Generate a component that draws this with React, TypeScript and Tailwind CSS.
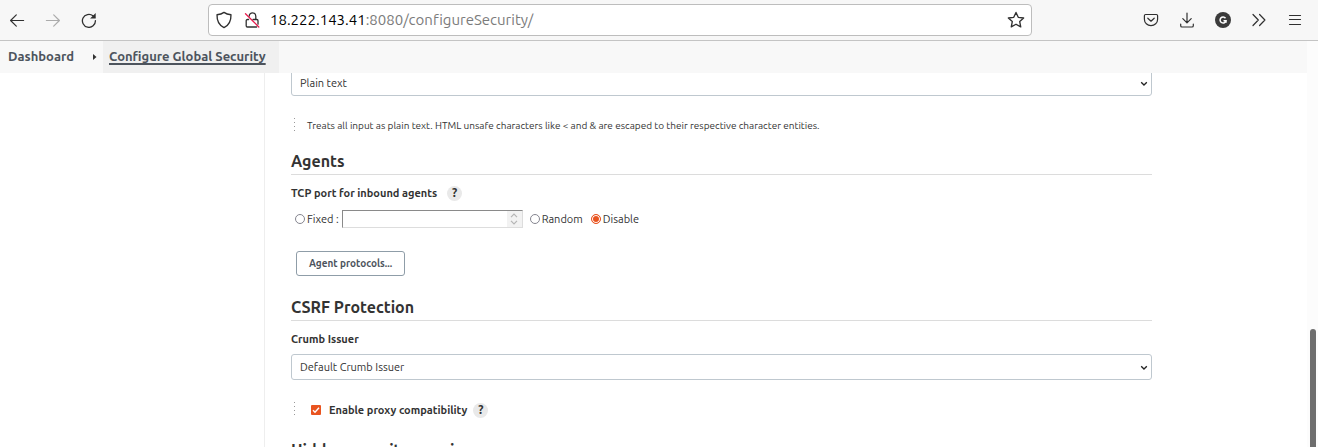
import type { ReactNode } from "react";

function IconButton({ label, children, className = "" }: { label: string; children: ReactNode; className?: string }) {
  return (
    <button type="button" aria-label={label} className={`flex size-5 shrink-0 items-center justify-center ${className}`}>
      {children}
    </button>
  );
}

function Line({ d, size = 16, width = 1.2 }: { d: string; size?: number; width?: number }) {
  return (
    <svg width={size} height={size} viewBox="0 0 16 16" fill="none" stroke="currentColor" strokeWidth={width} strokeLinecap="round" strokeLinejoin="round" aria-hidden="true">
      <path d={d} />
    </svg>
  );
}

function BrowserBar() {
  return (
    <header className="flex h-[41px] shrink-0 items-center border-b border-[#c4c4c4] bg-[#f7f7f7] pr-[13px] pl-[7px] text-[#303030]">
      <div className="flex w-[201px] shrink-0 gap-4">
        <IconButton label="Back">
          <Line d="M14.6 8.5H1.6M7.3 2.9L1.6 8.5l5.7 5.6" />
        </IconButton>
        <IconButton label="Forward" className="text-[#ababab]">
          <Line d="M1.4 8.5h13M8.7 2.9l5.7 5.6-5.7 5.6" />
        </IconButton>
        <IconButton label="Reload">
          <svg width="16" height="16" viewBox="0 0 16 16" fill="none" stroke="currentColor" strokeWidth="1.3" aria-hidden="true">
            <path d="M14.4 8.6A6.5 6.5 0 1 1 12 3.8l1.6 1.5" strokeLinecap="round" />
            <path d="M14.7 1v5.6H9.1z" fill="currentColor" stroke="none" />
          </svg>
        </IconButton>
      </div>
      <div className="flex h-8 w-[824px] items-center rounded-[4px] border border-[#bdbdbd] bg-white px-[5px]">
        <IconButton label="Tracking protection">
          <Line size={18} d="M8 1.2c1.8 1.3 3.9 1.9 6.2 2.1C14.4 8.9 12.3 12.7 8 14.8 3.7 12.7 1.6 8.9 1.8 3.3 4.1 3.1 6.2 2.500 8 1.2z" />
        </IconButton>
        <IconButton label="Connection not secure" className="ml-2">
          <svg width="16" height="16" viewBox="0 0 16 16" fill="none" stroke="currentColor" strokeWidth="1.3" strokeLinecap="round" aria-hidden="true">
            <path d="M5.2 4.2C5.2-.2 11.8-.2 11.8 4.2v3M4.6 7.5H3.4C2.7 7.5 2.2 8 2.2 8.7v5.1c0 .7.5 1.2 1.2 1.2h9.2M9 7.5h3.8c.7 0 1.2.5 1.2 1.2v3.5" />
            <path d="M1.5 1.700l13.3 13.3" stroke="#e8194b" />
          </svg>
        </IconButton>
        <div role="textbox" aria-label="Address" tabIndex={0} className="ml-2 min-w-0 flex-1 text-[15px] leading-5 whitespace-nowrap text-[#7b7b7b] [font-variant-ligatures:none]">
          <span className="text-black">18.222.143.41</span>:8080/configureSecurity/
        </div>
        <IconButton label="Bookmark this page">
          <Line size={18} d="M8 1.3l2 4.3 4.8.6-3.5 3.2.9 4.7L8 11.800l-4.2 2.3.9-4.7L1.2 6.2 6 5.6z" />
        </IconButton>
      </div>
      <div className="ml-auto flex gap-4">
        <IconButton label="Save to Pocket">
          <Line d="M2.6 2.5h10.8c.7 0 1.2.5 1.2 1.2v3.5c0 3.7-2.9 6.4-6.6 6.4S1.4 10.900 1.4 7.200V3.700c0-.7.5-1.200 1.200-1.200zM4.8 6.2L8 9.2l3.200-3" />
        </IconButton>
        <IconButton label="Downloads">
          <Line d="M8 1v9.6M3.800 6.600L8 10.800l4.200-4.200M1.700 12.200v1.500c0 .8.5 1.300 1.300 1.300h10c.8 0 1.300-.5 1.300-1.300v-1.500" />
        </IconButton>
        <IconButton label="Grammarly">
          <svg width="16" height="16" viewBox="0 0 16 16" fill="none" aria-hidden="true">
            <circle cx="8" cy="8" r="8" fill="#3b3b3b" />
            <path d="M10.500 6.200A3 3 0 1 0 11 8.700H8.500M11 8.700v2" stroke="#fff" strokeWidth="1.5" />
          </svg>
        </IconButton>
        <IconButton label="More tools">
          <Line d="M2 2.500l5.300 5.500L2 13.500M8.600 2.500l5.300 5.500-5.300 5.500" />
        </IconButton>
        <IconButton label="Menu">
          <Line d="M2.500 3.500h11M2.500 7.500h11M2.500 12.500h11" />
        </IconButton>
      </div>
    </header>
  );
}

function Help({ topic }: { topic: string }) {
  return (
    <button type="button" aria-label={`Help for ${topic}`} className="flex size-[15px] items-center justify-center rounded-full bg-[#e9e9e9] text-[12px] leading-none font-bold">
      ?
    </button>
  );
}

function Dropdown({ id, label, value }: { id: string; label: string; value: string }) {
  return (
    <div className="relative">
      <select id={id} aria-label={label} className="block h-[26px] w-full appearance-none rounded-[3px] border border-[#bfc8cf] bg-white px-2 text-[11px] text-[#333]">
        <option>{value}</option>
      </select>
      <svg className="pointer-events-none absolute top-[11px] right-1" width="8" height="6" viewBox="0 0 8 6" fill="none" stroke="#222" strokeWidth="1.3" aria-hidden="true">
        <path d="M1.2 1.2L4 4l2.800-2.800" />
      </svg>
    </div>
  );
}

function Heading({ children }: { children: ReactNode }) {
  return <h2 className="h-7 border-b border-[#dcdcdc] text-base leading-7 font-bold text-[#333]">{children}</h2>;
}

function PortOption({ label, checked = false }: { label: string; checked?: boolean }) {
  return (
    <label className="flex items-center gap-[2px]">
      <input type="radio" name="port" defaultChecked={checked} className="size-[10px] appearance-none rounded-full border border-[#85858f] bg-white checked:border-[#e95420] checked:bg-[#e95420] checked:shadow-[inset_0_0_0_1px_white]" />
      {label}
    </label>
  );
}

function DottedRule() {
  return <span aria-hidden="true" className="w-px self-stretch bg-[repeating-linear-gradient(to_bottom,#999_0_1px,transparent_1px_4px)]" />;
}

function Settings() {
  return (
    <form className="-mt-[3px] text-[11px] leading-4 text-[#333]">
      <Dropdown id="formatter" label="Markup Formatter" value="Plain text" />
      <div className="mt-[22px] ml-[3px] flex gap-3 text-[10px] leading-4">
        <DottedRule />
        <p>Treats all input as plain text. HTML unsafe characters like &lt; and &amp; are escaped to their respective character entities.</p>
      </div>

      <div className="mt-[13px]">
        <Heading>Agents</Heading>
      </div>
      <div className="mt-[10px] flex h-4 items-center gap-[10px] font-bold">
        <span>TCP port for inbound agents</span>
        <Help topic="TCP port for inbound agents" />
      </div>
      <div className="mt-[9px] ml-1 flex h-[18px] items-center">
        <PortOption label="Fixed :" />
        <div className="relative ml-[3px] w-[181px]">
          <input type="text" inputMode="numeric" aria-label="Fixed port" className="block h-[18px] w-full border border-t-[#8a8a8a] border-r-[#ddd] border-b-[#ddd] border-l-[#8a8a8a] bg-white px-1" />
          <span className="absolute top-px right-px flex h-4 w-[15px] items-center justify-center bg-[#f2f2f2]">
            <svg width="8" height="12" viewBox="0 0 8 12" fill="none" stroke="#b5b5b5" strokeWidth="1.2" aria-hidden="true">
              <path d="M1 4.2l3-3 3 3M1 7.800l3 3 3-3" />
            </svg>
          </span>
        </div>
        <div className="ml-[7px] flex gap-2">
          <PortOption label="Random" />
          <PortOption label="Disable" checked />
        </div>
      </div>
      <button type="button" className="mt-[23px] ml-[5px] block h-[25px] w-[109px] rounded-[3px] border border-[#8f9da8] bg-white text-[10px] font-bold text-[#4d545d]">
        Agent protocols...
      </button>

      <div className="mt-[17px]">
        <Heading>CSRF Protection</Heading>
      </div>
      <label htmlFor="crumb" className="mt-[10px] mb-[7px] block font-semibold">Crumb Issuer</label>
      <Dropdown id="crumb" label="Crumb Issuer" value="Default Crumb Issuer" />
      <div className="mt-[22px] ml-[3px] flex h-4 items-center">
        <DottedRule />
        <label className="ml-4 flex items-center gap-2 font-semibold">
          <span className="relative block size-[10px]">
            <input type="checkbox" defaultChecked className="block size-[10px] appearance-none rounded-[1px] bg-[#e95420]" />
            <svg className="pointer-events-none absolute inset-0" width="10" height="10" viewBox="0 0 10 10" fill="none" stroke="#fff" strokeWidth="1.4" aria-hidden="true">
              <path d="M2 5.2l2 2 4-4.4" />
            </svg>
          </span>
          Enable proxy compatibility
        </label>
        <div className="ml-[6px]">
          <Help topic="proxy compatibility" />
        </div>
      </div>
      <div className="mt-[18px]">
        <Heading>Hidden security warnings</Heading>
      </div>
    </form>
  );
}

export default function App() {
  return (
    <div className="flex h-screen flex-col overflow-hidden bg-white font-['Ubuntu','Noto_Sans',sans-serif]">
      <BrowserBar />
      <div className="flex min-h-0 flex-1">
        <div className="flex min-w-0 flex-1 flex-col">
          <nav aria-label="Breadcrumb" className="flex h-8 shrink-0 items-center bg-[#f8f8f8] pl-2 text-[13px] font-bold text-[#4d545d]">
            <a href="#dashboard" className="w-[84px]">Dashboard</a>
            <svg width="5" height="6" viewBox="0 0 5 6" fill="#333" aria-hidden="true">
              <path d="M1 0l3.5 3L1 6z" />
            </svg>
            <a href="#security" className="ml-[6px] flex h-8 w-[176px] items-center bg-[#f0f0f0] px-[6px] whitespace-nowrap underline decoration-2 underline-offset-2 [text-decoration-skip-ink:none]">
              Configure Global Security
            </a>
          </nav>
          <div className="flex min-h-0 flex-1 overflow-hidden">
            <aside className="w-[265px] shrink-0 border-r border-[#eee]" />
            <main className="min-w-0 flex-1 pr-[155px] pl-[26px]">
              <Settings />
            </main>
          </div>
        </div>
        <div className="flex w-[11px] shrink-0 flex-col items-center bg-[#fcfcfc] pt-[288px]" aria-hidden="true">
          <div className="w-[6px] flex-1 rounded-t-full bg-[#6e6e6e]" />
        </div>
      </div>
    </div>
  );
}
